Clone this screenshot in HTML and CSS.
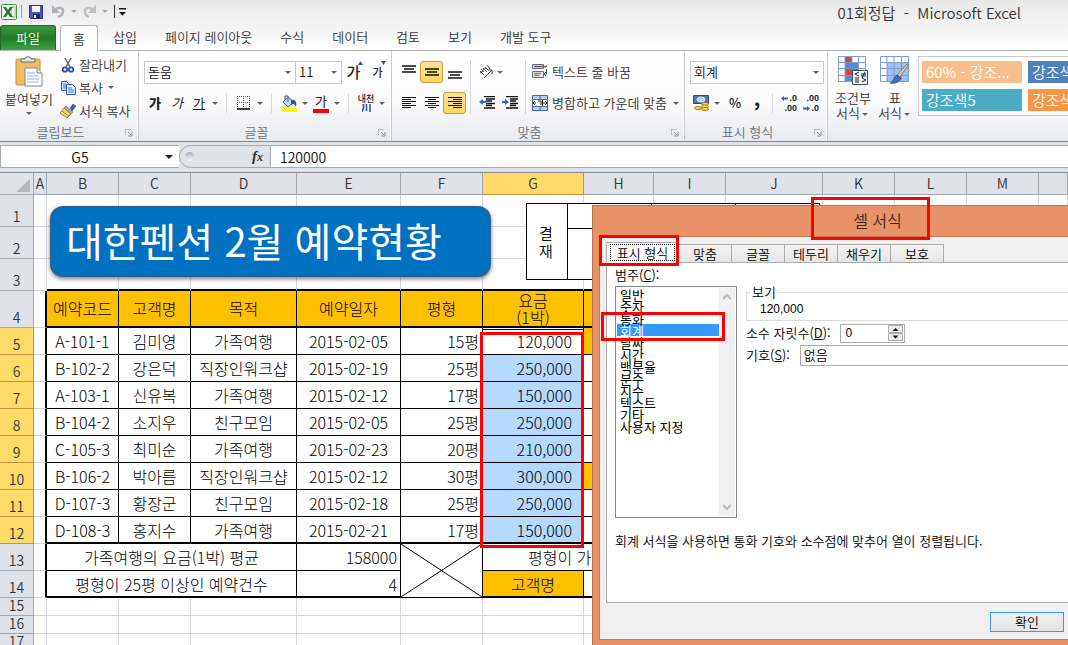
FILE: index.html
```html
<!DOCTYPE html>
<html lang="ko">
<head>
    <meta charset="UTF-8" />
    <meta name="viewport" content="width=device-width, initial-scale=1.0"/>
    <title>01회정답 - Microsoft Excel</title>
    <link rel="stylesheet" href="styles.css">
</head>
<body>
<header class="titlebar">
    <div class="quick">
        <svg class="logo" width="16" height="16" viewBox="0 0 16 16"><rect x=".5" y=".5" width="15" height="15" rx="1" fill="#eef6ee" stroke="#3f8f46"/><path d="M10 3h4v10h-4z" fill="#fff" stroke="#8dba90"/><path d="M2 3h3l2 3 2-3h3L8.500 8l3.500 5H9L7 10l-2 3H2l3.500-5z" fill="#1f7a2c"/></svg>
        <span class="bar"></span>
        <button aria-label="저장" class="quick-save"><svg width="14" height="14" viewBox="0 0 14 14"><path d="M.5.5h13v13h-12l-1-1z" fill="#4a55c0" stroke="#2c3590"/><path d="M3 1h8v6H3z" fill="#f4f7ff"/><path d="M4 9h7v5H4z" fill="#20286e"/><path d="M5 10h2v3H5z" fill="#fff"/></svg></button>
        <button aria-label="실행 취소" class="quick-undo"><svg width="13" height="13" viewBox="0 0 13 13"><path d="M3 5C6 2 11 2 11 6c0 3-2 5-5 6" fill="none" stroke="#b0b3b7" stroke-width="2.500"/><path d="M0 0v8h8z" fill="#b0b3b7"/></svg><i class="arrow pale"></i></button>
        <button aria-label="다시 실행" class="quick-redo"><svg width="13" height="13" viewBox="0 0 13 13"><path d="M10 5C7 2 2 2 2 6c0 3 1 5 4 6" fill="none" stroke="#bcbfc3" stroke-width="2.500"/><path d="M13 0v8H5z" fill="#bcbfc3"/></svg><i class="arrow pale"></i></button>
        <span class="bar dark"></span>
        <button aria-label="빠른 실행 도구 모음"><svg width="7" height="8" viewBox="0 0 7 8"><path d="M0 0h7v1.500H0zM0 4h7L3.500 7.500z" fill="#111"/></svg></button>
    </div>
    <h1>01회정답&nbsp; -&nbsp; Microsoft Excel</h1>
</header>

<nav class="tabs">
    <button class="tab file">파일</button>
    <button class="tab home">홈</button>
    <button class="tab">삽입</button>
    <button class="tab">페이지 레이아웃</button>
    <button class="tab">수식</button>
    <button class="tab">데이터</button>
    <button class="tab">검토</button>
    <button class="tab">보기</button>
    <button class="tab">개발 도구</button>
</nav>

<section class="ribbon">
    <div class="group clipboard">
        <div class="group-body">
            <button class="big paste">
                <svg width="28" height="31" viewBox="0 0 28 31"><rect x="1" y="3" width="24" height="26" rx="1" fill="#f0bd62" stroke="#c8913c"/><path d="M6 6V3h4c0-3 6-3 6 0h4v3z" fill="#e4e7ea" stroke="#6d7177"/><path d="M10 12h12l5 5v13H10z" fill="#fff" stroke="#7488a8"/><path d="M22 12v5h5" fill="#dde6f2" stroke="#7488a8"/><path d="M12 17h8M12 20h12M12 23h12M12 26h12" stroke="#9db3d0"/></svg>
                <span>붙여넣기</span><i class="arrow"></i>
            </button>
            <div class="small-list">
                <button><svg width="16" height="16" viewBox="0 0 16 16"><path d="M5 1l5 9M11 1L6 10" stroke="#56657c" stroke-width="1.500" fill="none"/><circle cx="5" cy="12.500" r="2.200" fill="none" stroke="#2a50b0" stroke-width="1.800"/><circle cx="11" cy="12.500" r="2.200" fill="none" stroke="#2a50b0" stroke-width="1.800"/></svg>잘라내기</button>
                <button><svg width="16" height="16" viewBox="0 0 16 16"><path d="M1.500 1.500h5l2 2v7h-7z" fill="#cfe0fb" stroke="#2f5fb4"/><path d="M6.500 4.500h6l3 3v7h-9z" fill="#e9f1ff" stroke="#2f5fb4"/><path d="M3 4h3M3 6h3M3 8h3M8 8h4M8 10h6M8 12h6" stroke="#4478c8"/></svg>복사<i class="arrow"></i></button>
                <button><svg width="16" height="16" viewBox="0 0 16 16"><path d="M10 5l3-4 3 2-4 5z" fill="#4a59a4" stroke="#343f78" stroke-width=".5"/><path d="M6 3l7 6-2 2-7-6z" fill="#a9adb8" stroke="#555" stroke-width=".5"/><path d="M4 5l7 6-4 4-7-5z" fill="#f3d965" stroke="#8f7426" stroke-width=".8"/><path d="M2 8l7 5" stroke="#a08530"/></svg>서식 복사</button>
            </div>
        </div>
        <div class="group-name">클립보드<svg class="launcher" viewBox="0 0 8 8"><path d="M0 6V0h6M3 3l3 3M7 3v4H3" fill="none" stroke="#8a8f97"/></svg></div>
    </div>

    <div class="group font">
        <div class="rows">
            <div class="row">
                <span class="combo font-name"><select aria-label="글꼴"><option>돋움</option></select><i class="arrow"></i></span>
                <span class="combo font-size"><select aria-label="글꼴 크기"><option>11</option></select><i class="arrow"></i></span>
                <button class="tool grow" aria-label="글꼴 크게">가<svg width="5" height="4" viewBox="0 0 5 4"><path d="M0 4h5L2.500 0z" fill="#2956b2"/></svg></button>
                <button class="tool shrink" aria-label="글꼴 작게">가<svg width="5" height="4" viewBox="0 0 5 4"><path d="M0 0h5L2.500 4z" fill="#2956b2"/></svg></button>
            </div>
            <div class="row">
                <button class="tool bold">가</button>
                <button class="tool italic">가</button>
                <button class="tool underline">가</button><i class="arrow"></i>
                <span class="sep"></span>
                <button class="tool" aria-label="테두리"><svg width="14" height="14" viewBox="0 0 14 14"><path d="M.5 0v12M6.500 0v12M12.500 0v12M0 .5h13M0 6.500h13" stroke="#555" stroke-dasharray="1 1"/><path d="M0 13h13" stroke="#000" stroke-width="1.500"/></svg></button><i class="arrow"></i>
                <span class="sep"></span>
                <button class="tool" aria-label="채우기 색"><svg width="16" height="17" viewBox="0 0 16 17"><path d="M7 2l6 5-6 5-5-5z" fill="#c8daf3" stroke="#3f5f92"/><path d="M7 7V1H4v4" fill="none" stroke="#44597a"/><path d="M10 5c5-1 6 3 5 7-1-3-3-4-5-2z" fill="#2456a4"/><path d="M0 13h16v4H0z" fill="#ff0"/></svg></button><i class="arrow"></i>
                <button class="tool font-color" aria-label="글꼴 색">가</button><i class="arrow"></i>
                <span class="sep"></span>
                <button class="tool phonetic" aria-label="윗주">내천<svg width="9" height="8" viewBox="0 0 9 8"><path d="M1.500 0v4L0 8M4.500 0v7M8 0v8" fill="none" stroke="#2453b5" stroke-width="1.600"/></svg></button><i class="arrow"></i>
            </div>
        </div>
        <div class="group-name">글꼴<svg class="launcher" viewBox="0 0 8 8"><path d="M0 6V0h6M3 3l3 3M7 3v4H3" fill="none" stroke="#8a8f97"/></svg></div>
    </div>

    <div class="group align">
        <div class="group-body">
            <div class="rows">
                <div class="row">
                    <button class="tool" aria-label="위쪽 맞춤"><svg width="14" height="14" viewBox="0 0 14 14"><path d="M0 1h14M2 4h10M0 7h14" stroke="#111" stroke-width="1.600"/></svg></button>
                    <button class="tool on" aria-label="가운데 맞춤"><svg width="14" height="14" viewBox="0 0 14 14"><path d="M0 4h14M2 7h10M0 10h14" stroke="#111" stroke-width="1.600"/></svg></button>
                    <button class="tool" aria-label="아래쪽 맞춤"><svg width="14" height="14" viewBox="0 0 14 14"><path d="M0 7h14M2 10h10M0 13h14" stroke="#111" stroke-width="1.600"/></svg></button>
                </div>
                <div class="row">
                    <button class="tool" aria-label="텍스트 왼쪽 맞춤"><svg width="14" height="12" viewBox="0 0 14 12"><path d="M0 .5h14M0 2.500h9M0 4.500h14M0 6.500h9M0 8.500h14M0 10.500h9" stroke="#111"/></svg></button>
                    <button class="tool" aria-label="텍스트 가운데 맞춤"><svg width="14" height="12" viewBox="0 0 14 12"><path d="M0 .5h14M3 2.500h8M0 4.500h14M3 6.500h8M0 8.500h14M3 10.500h8" stroke="#111"/></svg></button>
                    <button class="tool on" aria-label="텍스트 오른쪽 맞춤"><svg width="14" height="12" viewBox="0 0 14 12"><path d="M0 .5h14M5 2.500h9M0 4.500h14M5 6.500h9M0 8.500h14M5 10.500h9" stroke="#111"/></svg></button>
                </div>
            </div>
            <span class="sep tall"></span>
            <div class="rows">
                <div class="row orientation">
                    <button class="tool" aria-label="방향"><svg width="16" height="14" viewBox="0 0 16 14"><path d="M1 6l4 4M2 4l3 3M4 3l4 4M6 2l3 3M8 0l3 4M1 8l3-2M4 5l3-2" stroke="#444" fill="none"/><path d="M5 13l8-8M13 9V5H9" stroke="#444" fill="none"/></svg></button><i class="arrow"></i>
                </div>
                <div class="row">
                    <button class="tool" aria-label="내어쓰기"><svg width="16" height="14" viewBox="0 0 16 14"><path d="M5 .5h11M7 3h9M7 5h6M7 7.500h9M7 9.500h6M5 12h11" stroke="#111" stroke-width="1.400"/><path d="M0 6l4-3v2h3v2H4v2z" fill="#2f62c4"/></svg></button>
                    <button class="tool" aria-label="들여쓰기"><svg width="16" height="14" viewBox="0 0 16 14"><path d="M4 .5h12M8 3h8M8 5h6M8 7.500h8M8 9.500h6M4 12h12" stroke="#111" stroke-width="1.400"/><path d="M7 6L3 3v2H0v2h3v2z" fill="#2f62c4"/></svg></button>
                </div>
            </div>
            <span class="sep tall"></span>
            <div class="rows">
                <div class="row">
                    <button class="wide"><svg width="16" height="16" viewBox="0 0 16 16"><path d="M.5.500h11v4H.5zM.5 7.500h11v6H.5z" fill="#dfe8f6" stroke="#54719f"/><path d="M2 2.500h13" stroke="#8d4a22" stroke-width="1.500"/><path d="M2 9.500h7M2 11.500h5" stroke="#c07d45" stroke-width="1.300"/><path d="M14.500 5v5h-2M14 8l-2 2 2 2" fill="none" stroke="#2f5ca8"/></svg>텍스트 줄 바꿈</button>
                </div>
                <div class="row">
                    <button class="wide"><svg width="16" height="16" viewBox="0 0 16 16"><path d="M.5.500h15v15H.5zM8 0v4M8 12v4M0 4.500h16M0 11.500h16" fill="#b9cfef" stroke="#46659a"/><path d="M1 5h14v6H1z" fill="#fff"/><path d="M1 8h3M12 8h3M3 6l-2 2 2 2M13 6l2 2-2 2M6 6h3v4M10.500 5v6M10.500 8H12" stroke="#222" fill="none"/></svg>병합하고 가운데 맞춤<i class="arrow"></i></button>
                </div>
            </div>
        </div>
        <div class="group-name">맞춤<svg class="launcher" viewBox="0 0 8 8"><path d="M0 6V0h6M3 3l3 3M7 3v4H3" fill="none" stroke="#8a8f97"/></svg></div>
    </div>

    <div class="group number">
        <div class="rows">
            <div class="row">
                <span class="combo number-format"><select aria-label="표시 형식"><option>회계</option></select><i class="arrow"></i></span>
            </div>
            <div class="row">
                <button class="tool" aria-label="회계 표시 형식"><svg width="17" height="16" viewBox="0 0 17 16"><path d="M.5.500h15v8H.5z" fill="#4c78bd" stroke="#274b87"/><ellipse cx="8" cy="4.500" rx="4" ry="2.500" fill="#b9d0f0" stroke="#dfeafa"/><ellipse cx="12" cy="9" rx="3.500" ry="1.500" fill="#fbdc6d" stroke="#a9780f"/><ellipse cx="12" cy="11.500" rx="3.500" ry="1.500" fill="#fbdc6d" stroke="#a9780f"/><ellipse cx="5" cy="13" rx="3.500" ry="1.500" fill="#fbdc6d" stroke="#a9780f"/><ellipse cx="12" cy="14" rx="3.500" ry="1.500" fill="#fbdc6d" stroke="#a9780f"/></svg></button><i class="arrow"></i>
                <button class="tool percent">%</button>
                <button class="tool comma">,</button>
                <span class="sep"></span>
                <button class="tool decimals" aria-label="자릿수 늘림"><span><svg width="7" height="5" viewBox="0 0 7 5"><path d="M0 2.500L3 0v1.500h4v2H3V5z" fill="#2f62c4"/></svg>.0</span><span>.00</span></button>
                <button class="tool decimals" aria-label="자릿수 줄임"><span>.00</span><span><svg width="7" height="5" viewBox="0 0 7 5"><path d="M7 2.500L4 0v1.500H0v2h4V5z" fill="#2f62c4"/></svg>.0</span></button>
            </div>
        </div>
        <div class="group-name">표시 형식<svg class="launcher" viewBox="0 0 8 8"><path d="M0 6V0h6M3 3l3 3M7 3v4H3" fill="none" stroke="#8a8f97"/></svg></div>
    </div>

    <div class="group styles">
        <button class="big">
            <svg width="30" height="30" viewBox="0 0 30 30"><path d="M.5.500h27v25H.5z" fill="#fff"/><path d="M7 1h7v5H7zM7 13h13v6H7z" fill="#d8442c"/><path d="M7 7h13v5H7zM7 20h7v5H7z" fill="#5b87d8"/><path d="M.5.500h27v25H.5zM0 6.500h28M0 12.500h28M0 19.500h28M7 0v26M14 0v7M20.500 0v26" fill="none" stroke="#7d9dcc"/><path d="M14.500 14.500h15v14h-15z" fill="#f3f6fb" stroke="#3c4d6a"/><path d="M21 16l-4 2 4 2M17 22h4M23 18h5M23 20h5M27 16l-3 6M17 24h4M24 22l4 2-4 2M17 26h4" stroke="#222" fill="none"/></svg>
            <span>조건부</span><span>서식<i class="arrow"></i></span>
        </button>
        <button class="big">
            <svg width="30" height="30" viewBox="0 0 30 30"><path d="M.5.500h28v25H.5z" fill="#fff"/><path d="M7 7h21v18H7z" fill="#9fc1f3"/><path d="M.5.500h28v25H.5zM0 6.500h29M0 12.500h29M0 19.500h29M7 0v26M14 0v26M21.500 0v26" fill="none" stroke="#7d9dcc"/><path d="M29 8L20 21l-3-2L27 8z" fill="#d9c9ae" stroke="#6b6353" stroke-width=".7"/><path d="M17 19l4 3c-1 4-6 6-11 5 4-1 3-6 7-8z" fill="#3f6cc0" stroke="#28437c" stroke-width=".7"/></svg>
            <span>표</span><span>서식<i class="arrow"></i></span>
        </button>
        <div class="gallery">
            <button class="chip peach">60% - 강조...</button>
            <button class="chip blue">강조색1</button>
            <button class="chip teal">강조색5</button>
            <button class="chip orange">강조색6</button>
        </div>
    </div>
</section>

<section class="formula">
    <div class="name-box"><input type="text" aria-label="이름 상자" value="G5"><i class="arrow"></i></div>
    <div class="fx"><span class="knob"></span><button aria-label="함수 삽입">f<small>x</small></button></div>
    <input class="formula-text" type="text" aria-label="수식 입력줄" value="120000">
</section>

<main class="sheet">
    <table class="grid">
        <colgroup>
            <col class="w-head"><col class="w-a"><col class="w-b"><col class="w-b"><col class="w-d"><col class="w-e"><col class="w-f"><col class="w-g">
            <col class="w-h"><col class="w-b"><col class="w-j"><col class="w-b"><col class="w-b"><col class="w-b"><col>
        </colgroup>
        <thead>
        <tr>
            <th class="corner"></th><th>A</th><th>B</th><th>C</th><th>D</th><th>E</th><th>F</th><th class="picked">G</th>
            <th>H</th><th>I</th><th>J</th><th>K</th><th>L</th><th>M</th><th></th>
        </tr>
        </thead>
        <tbody>
        <tr class="tall"><th>1</th><td></td><td></td><td></td><td></td><td></td><td></td><td></td><td></td><td></td><td></td><td></td><td></td><td></td><td></td></tr>
        <tr class="tall"><th>2</th><td></td><td></td><td></td><td></td><td></td><td></td><td></td><td></td><td></td><td></td><td></td><td></td><td></td><td></td></tr>
        <tr class="tall thick"><th>3</th><td class="edge-off"></td><td></td><td></td><td></td><td></td><td></td><td></td><td></td><td></td><td></td><td></td><td></td><td></td><td></td></tr>
        <tr class="data head thick"><th>4</th><td class="edge"></td><td>예약코드</td><td>고객명</td><td>목적</td><td>예약일자</td><td>평형</td><td>요금<br>(1박)</td><td></td><td colspan="6"></td></tr>
        <tr class="data"><th class="picked">5</th><td class="edge"></td><td>A-101-1</td><td>김미영</td><td>가족여행</td><td>2015-02-05</td><td class="right">15평</td><td class="fee active">120,000</td><td class="gold"></td><td colspan="6"></td></tr>
        <tr class="data"><th class="picked">6</th><td class="edge"></td><td>B-102-2</td><td>강은덕</td><td>직장인워크샵</td><td>2015-02-19</td><td class="right">25평</td><td class="fee">250,000</td><td></td><td colspan="6"></td></tr>
        <tr class="data"><th class="picked">7</th><td class="edge"></td><td>A-103-1</td><td>신유복</td><td>가족여행</td><td>2015-02-12</td><td class="right">17평</td><td class="fee">150,000</td><td></td><td colspan="6"></td></tr>
        <tr class="data"><th class="picked">8</th><td class="edge"></td><td>B-104-2</td><td>소지우</td><td>친구모임</td><td>2015-02-05</td><td class="right">25평</td><td class="fee">250,000</td><td></td><td colspan="6"></td></tr>
        <tr class="data"><th class="picked">9</th><td class="edge"></td><td>C-105-3</td><td>최미순</td><td>가족여행</td><td>2015-02-23</td><td class="right">20평</td><td class="fee">210,000</td><td></td><td colspan="6"></td></tr>
        <tr class="data"><th class="picked">10</th><td class="edge"></td><td>B-106-2</td><td>박아름</td><td>직장인워크샵</td><td>2015-02-12</td><td class="right">30평</td><td class="fee">300,000</td><td class="gold"></td><td colspan="6"></td></tr>
        <tr class="data"><th class="picked">11</th><td class="edge"></td><td>D-107-3</td><td>황장군</td><td>친구모임</td><td>2015-02-18</td><td class="right">25평</td><td class="fee">250,000</td><td></td><td colspan="6"></td></tr>
        <tr class="data thick"><th class="picked">12</th><td class="edge"></td><td>D-108-3</td><td>홍지수</td><td>가족여행</td><td>2015-02-21</td><td class="right">17평</td><td class="fee">150,000</td><td></td><td colspan="6"></td></tr>
        <tr class="data"><th>13</th><td class="edge"></td><td colspan="3">가족여행의 요금(1박) 평균</td><td class="right">158000</td><td class="crossed" rowspan="2"><svg viewBox="0 0 81 53" preserveAspectRatio="none"><path d="M0 0l81 53M81 0L0 53" stroke="#000"/></svg></td><td class="summary" colspan="2">평형이 가</td><td colspan="6"></td></tr>
        <tr class="data thick"><th>14</th><td class="edge"></td><td colspan="3">평형이 25평 이상인 예약건수</td><td class="right">4</td><td class="gold">고객명</td><td></td><td colspan="6"></td></tr>
        <tr class="short"><th>15</th><td></td><td></td><td></td><td></td><td></td><td></td><td></td><td></td><td></td><td></td><td></td><td></td><td></td><td></td></tr>
        <tr class="short"><th>16</th><td></td><td></td><td></td><td></td><td></td><td></td><td></td><td></td><td></td><td></td><td></td><td></td><td></td><td></td></tr>
        <tr class="short"><th>17</th><td></td><td></td><td></td><td></td><td></td><td></td><td></td><td></td><td></td><td></td><td></td><td></td><td></td><td></td></tr>
        </tbody>
    </table>

    <div class="banner">대한펜션 2월 예약현황</div>

    <div class="approval">
        <div class="approval-label">결<br>재</div>
        <div></div><div></div><div></div>
        <div></div><div></div><div></div>
    </div>

    <span class="mark mark-fee"></span>

    <div class="dialog" role="dialog" aria-labelledby="dialog-title">
        <h2 id="dialog-title">셀 서식</h2>
        <div class="dialog-body">
            <div class="dialog-tabs">
                <button class="current"><span>표시 형식</span></button>
                <button>맞춤</button>
                <button>글꼴</button>
                <button>테두리</button>
                <button>채우기</button>
                <button>보호</button>
            </div>
            <div class="panel">
                <div class="panel-columns">
                    <div class="category">
                        <label for="category">범주(<u>C</u>):</label>
                        <div class="listbox">
                            <select id="category" size="19">
                                <option>일반</option>
                                <option>숫자</option>
                                <option>통화</option>
                                <option selected>회계</option>
                                <option>날짜</option>
                                <option>시간</option>
                                <option>백분율</option>
                                <option>분수</option>
                                <option>지수</option>
                                <option>텍스트</option>
                                <option>기타</option>
                                <option>사용자 지정</option>
                            </select>
                            <div class="scroll">
                                <svg width="8" height="6" viewBox="0 0 8 6"><path d="M0 5l4-4 4 4" fill="none" stroke="#bbb" stroke-width="2"/></svg>
                                <svg width="8" height="6" viewBox="0 0 8 6"><path d="M0 1l4 4 4-4" fill="none" stroke="#bbb" stroke-width="2"/></svg>
                            </div>
                        </div>
                    </div>
                    <div class="options">
                        <fieldset>
                            <legend>보기</legend>
                            <div class="sample">120,000</div>
                        </fieldset>
                        <div class="field">
                            <label for="digits">소수 자릿수(<u>D</u>):</label>
                            <span class="spinner"><input type="text" id="digits" value="0"><svg width="15" height="16" viewBox="0 0 15 16"><path d="M.5.500h14v7H.5zM.5 8.500h14v7H.5z" fill="#eee" stroke="#aaa"/><path d="M4.500 6h6l-3-3zM4.500 10.500h6l-3 3z" fill="#111"/></svg></span>
                        </div>
                        <div class="field">
                            <label for="symbol">기호(<u>S</u>):</label>
                            <select id="symbol"><option>없음</option></select>
                        </div>
                    </div>
                </div>
                <p>회계 서식을 사용하면 통화 기호와 소수점에 맞추어 열이 정렬됩니다.</p>
            </div>
            <div class="dialog-buttons"><button>확인</button></div>
        </div>
        <span class="mark mark-title"></span>
        <span class="mark mark-tab"></span>
        <span class="mark mark-category"></span>
    </div>
</main>
</body>
</html>
```
FILE: styles.css
```css
* {
    box-sizing: border-box;
}

body {
    margin: 0;
    height: 100vh;
    display: flex;
    flex-direction: column;
    overflow: hidden;
    font-family: "Noto Sans CJK KR", sans-serif;
    font-size: 13px;
    font-weight: 350;
    line-height: 18px;
    color: #333;
    background: #fff;
}

button, input, select {
    font: inherit;
    color: inherit;
    margin: 0;
    padding: 0;
    border: none;
    border-radius: 0;
    background: none;
    appearance: none;
    outline: none;
}

button {
    white-space: nowrap;
}

svg {
    display: block;
    flex: none;
}

/* title bar */
.titlebar {
    flex: none;
    height: 25px;
    display: flex;
    justify-content: space-between;
    padding: 0 47px 0 1px;
    background: linear-gradient(#e8e8e8, #f3f3f3);
}

.titlebar h1 {
    margin: 0;
    font-size: 15px;
    font-weight: 350;
    line-height: 25px;
}

.quick {
    display: flex;
    align-items: center;
    height: 23px;
}

.quick button {
    display: flex;
    align-items: center;
}

.bar {
    width: 1px;
    height: 13px;
    margin: 0 7px 0 4px;
    background: #999;
}

.bar.dark {
    background: #333;
    margin: 0 4px 0 0;
}

.quick-undo {
    margin-left: 9px;
}

.quick-undo .arrow, .quick-redo .arrow {
    width: 18px;
}

.arrow {
    flex: none;
    display: inline-flex;
    width: 10px;
    justify-content: center;
    vertical-align: middle;
}

.arrow::before {
    content: "";
    border: 3px solid transparent;
    border-top-color: #666;
    border-bottom: none;
}

.arrow.pale::before {
    border-top-color: #aaa;
}

/* ribbon tabs */
.tabs {
    flex: none;
    display: flex;
    height: 26px;
    background: linear-gradient(#f3f3f3, #fff);
    border-bottom: 1px solid #b3b5b9;
}

.tab {
    height: 24px;
    padding: 0 14px;
}

.tab.file {
    width: 56px;
    height: 25px;
    color: #fff;
    border: 1px solid #1d6b22;
    border-bottom: none;
    border-radius: 3px 3px 0 0;
    background: linear-gradient(#3c9a3f, #1f7a26 50%, #3aa53e);
}

.tab.home {
    height: 26px;
    width: 38px;
    margin: 0 1px 0 4px;
    padding: 0;
    border: 1px solid #b3b5b9;
    border-bottom: none;
    border-radius: 3px 3px 0 0;
    background: #fff;
}

/* ribbon */
.ribbon {
    flex: none;
    height: 91px;
    display: flex;
    overflow: hidden;
    background: linear-gradient(#fff, #fafafb 60%, #e7e9ec);
    border-bottom: 1px solid #85898f;
}

.group {
    flex: none;
    display: flex;
    flex-direction: column;
    padding: 9px 0 0 5px;
    border-right: 1px solid #c9ccd1;
    box-shadow: inset -1px 0 #fff;
}

.group-body {
    display: flex;
}

.group-name {
    position: relative;
    margin-top: auto;
    padding-right: 22px;
    text-align: center;
    color: #6a707c;
}

.launcher {
    position: absolute;
    right: 5px;
    bottom: 4px;
    width: 8px;
    height: 8px;
}

.clipboard {
    width: 139px;
    padding-top: 2px;
}

.font {
    width: 253px;
}

.align {
    width: 293px;
}

.number {
    width: 143px;
}

.styles {
    flex: 1;
    flex-direction: row;
    padding: 5px 0 0 4px;
    border-right: none;
}

.rows {
    display: flex;
    flex-direction: column;
    gap: 7px;
}

.row {
    display: flex;
    align-items: center;
    height: 24px;
}

.tool {
    position: relative;
    display: flex;
    align-items: center;
    justify-content: center;
    width: 22px;
    height: 22px;
    color: #222;
    border-radius: 3px;
}

.align .tool {
    width: 23px;
}

.align .orientation .arrow {
    width: 4px;
}

.tool.on {
    border: 1px solid #c29b3e;
    background: linear-gradient(#fde49a, #fed65b);
}

.sep {
    width: 1px;
    height: 20px;
    margin: 0 6px;
    background: #d5d8dc;
}

.sep.tall {
    height: 54px;
    margin: 0 4px;
}

.bold {
    font-weight: 900;
}

.italic {
    font-style: italic;
    font-weight: 400;
}

.underline {
    font-weight: 400;
    text-decoration: underline;
}

.grow, .shrink {
    align-items: flex-start;
    margin-left: 2px;
    font-size: 15px;
    font-weight: 500;
    line-height: 22px;
}

.shrink {
    font-size: 11px;
}

.grow svg, .shrink svg {
    margin-left: -2px;
}

.font-color {
    font-weight: 400;
    line-height: 12px;
    align-items: flex-start;
    padding-top: 3px;
}

.font-color::after {
    content: "";
    position: absolute;
    left: 3px;
    right: 3px;
    bottom: 1px;
    height: 4px;
    background: #f00;
}

.phonetic {
    flex-direction: column;
    font-size: 9px;
    font-weight: 500;
    line-height: 10px;
}

.percent {
    margin-left: 2px;
    font-weight: 500;
}

.comma {
    font-size: 20px;
    font-weight: 700;
    line-height: 12px;
    align-items: flex-start;
}

.decimals {
    flex-direction: column;
    align-items: flex-end;
    padding-right: 2px;
    font-family: "Liberation Sans", sans-serif;
    font-size: 9px;
    font-weight: 700;
    line-height: 10px;
}

.decimals span {
    display: flex;
    align-items: center;
    gap: 1px;
}

.number .sep {
    margin: 0 4px;
}

.combo {
    display: flex;
    align-items: center;
    height: 23px;
    background: #fff;
    border: 1px solid #c8cbd0;
}

.combo select {
    flex: 1;
    min-width: 0;
    padding-left: 3px;
    color: #111;
}

.combo .arrow {
    width: 14px;
}

.font-name {
    width: 152px;
}

.font-size {
    width: 47px;
    margin-left: -1px;
}

.number-format {
    width: 134px;
}

.big {
    display: flex;
    flex-direction: column;
    align-items: center;
    width: 42px;
    line-height: 15px;
}

.big svg {
    margin-bottom: 4px;
}

.paste {
    width: 48px;
    padding-top: 3px;
}

.paste .arrow {
    margin-top: 6px;
}

.small-list {
    display: flex;
    flex-direction: column;
    margin-left: 7px;
}

.small-list button, .wide {
    display: flex;
    align-items: center;
    gap: 4px;
    height: 23px;
}

.small-list button {
    gap: 3px;
}

.wide {
    margin-left: 2px;
}

.gallery {
    flex: 1;
    display: grid;
    grid-template-columns: 100px 100px;
    grid-auto-rows: 22px;
    gap: 6px;
    height: 60px;
    margin-left: 2px;
    padding: 4px 3px;
    overflow: hidden;
    background: #fff;
    border: 1px solid #c8cbd0;
    border-right: none;
}

.chip {
    padding-left: 4px;
    font-size: 15px;
    line-height: 20px;
    text-align: left;
    color: #fff;
    overflow: hidden;
}

.peach {
    background: #fabf8f;
}

.blue {
    background: #4f81bd;
}

.teal {
    background: #4bacc6;
}

.orange {
    background: #f79646;
}

/* formula bar */
.formula {
    flex: none;
    display: flex;
    height: 31px;
    padding: 3px 0 4px;
    font-size: 14px;
    color: #111;
    background: #dfe2e8;
    border-bottom: 1px solid #83878d;
}

.name-box {
    display: flex;
    align-items: center;
    width: 179px;
    background: #fff;
    border: 1px solid #a5a9b0;
    border-right: none;
}

.name-box input {
    flex: 1;
    min-width: 0;
    text-align: center;
}

.name-box .arrow {
    width: 20px;
}

.name-box .arrow::before {
    border-width: 4px;
    border-top-color: #222;
    border-bottom: none;
}

.fx {
    display: flex;
    align-items: center;
    justify-content: space-between;
    width: 92px;
    padding: 0 7px 0 5px;
    border: 1px solid #a5a9b0;
    border-radius: 12px 0 0 12px;
}

.fx button {
    font-family: "Liberation Serif", serif;
    font-size: 15px;
    font-style: italic;
    font-weight: 700;
    color: #333;
}

.fx small {
    font-size: 12px;
}

.knob {
    width: 9px;
    height: 9px;
    border-radius: 50%;
    background: linear-gradient(#aeb2b8, #f4f5f7);
}

.formula-text {
    flex: 1;
    padding-left: 9px;
    background: #fff;
    border: 1px solid #a5a9b0;
    border-width: 1px 0;
}

/* sheet */
.sheet {
    position: relative;
    flex: 1;
    min-height: 0;
    overflow: hidden;
}

.grid {
    width: 100%;
    table-layout: fixed;
    border-collapse: separate;
    border-spacing: 0;
    color: #000;
}

.w-head { width: 34px; }
.w-a { width: 13px; }
.w-b { width: 72px; }
.w-d { width: 106px; }
.w-e { width: 104px; }
.w-f { width: 82px; }
.w-g { width: 101px; }
.w-h { width: 70px; }
.w-j { width: 97px; }

.grid th {
    padding: 0 0 2px;
    font-size: 14px;
    font-weight: 350;
    line-height: 15px;
    vertical-align: bottom;
    color: #333;
    background: #dfe2e8;
    border-right: 1px solid #a2a6ad;
    border-bottom: 1px solid #a2a6ad;
}

.grid thead th {
    height: 22px;
    padding: 0;
    vertical-align: middle;
}

.grid .corner {
    background: linear-gradient(135deg, transparent 50%, #b5b9bf 50%) 17px 6px / 13px 13px no-repeat #dfe2e8;
}

.grid th.picked {
    background: #ffdb69;
    border-color: #c5923a;
}

.grid td {
    padding: 0;
    font-size: 16px;
    font-weight: 300;
    line-height: 20px;
    text-align: center;
    white-space: nowrap;
    border-right: 1px solid #d4d7db;
    border-bottom: 1px solid #d4d7db;
}

.tall {
    height: 32px;
}

.data {
    height: 27px;
}

.short {
    height: 18px;
}

.grid .data td {
    border-color: #000;
}

.grid .thick td {
    border-bottom: 2px solid #000;
}

.grid .data .edge, .grid .thick .edge-off {
    border-bottom: 1px solid #d4d7db;
}

.grid .data .edge {
    border-right: 2px solid #000;
}

.grid .head {
    height: 37px;
}

.grid .head td {
    line-height: 17px;
}

.grid .head td:not(.edge), .grid td.gold {
    background: #ffc000;
}

.grid .right {
    padding-right: 3px;
    text-align: right;
}

.grid .fee {
    padding-right: 11px;
    text-align: right;
    background: #b5d9ff;
}

.grid .active {
    background: #fff;
    box-shadow: inset 0 1px #fff, inset 0 2px #000;
}

.crossed svg {
    width: 100%;
    height: 53px;
}

.grid .summary {
    padding-left: 45px;
    text-align: left;
}

.banner {
    position: absolute;
    left: 50px;
    top: 33px;
    width: 441px;
    height: 71px;
    padding-left: 14px;
    font-size: 40px;
    font-weight: 400;
    line-height: 64px;
    color: #fff;
    background: #0070c0;
    border: 2px solid #385d8a;
    border-radius: 13px;
    box-shadow: 0 2px 4px rgba(0, 0, 0, 0.5);
}

.approval {
    position: absolute;
    left: 526px;
    top: 30px;
    display: grid;
    grid-template-columns: 41px 84px 84px 84px;
    grid-template-rows: 25px 51px;
    color: #000;
    background: #fff;
    border: 1px solid #000;
    border-width: 1px 0 0 1px;
}

.approval div {
    border: 1px solid #000;
    border-width: 0 1px 1px 0;
}

.approval .approval-label {
    grid-row: span 2;
    padding: 20px 2px 0 0;
    font-size: 15px;
    text-align: center;
}

.mark {
    position: absolute;
    border: 3px solid #f00;
    pointer-events: none;
}

.mark-fee {
    left: 480px;
    top: 159px;
    width: 104px;
    height: 216px;
}

.mark-title {
    left: 218px;
    top: -9px;
    width: 119px;
    height: 43px;
}

.mark-tab {
    left: 6px;
    top: 29px;
    width: 80px;
    height: 31px;
}

.mark-category {
    left: 8px;
    top: 106px;
    width: 124px;
    height: 29px;
}

/* format cells dialog */
.dialog {
    position: absolute;
    left: 592px;
    top: 32px;
    width: 571px;
    padding: 0 6px 6px;
    color: #000;
    background: #e99268;
    border: 1px solid #b9734f;
}

.dialog h2 {
    margin: 0;
    height: 30px;
    font-size: 16px;
    font-weight: 350;
    line-height: 28px;
    text-align: center;
    color: #3a2a22;
}

.dialog-body {
    padding: 5px 0 7px 6px;
    background: #f0f0f0;
    border: 1px solid #c07c58;
}

.dialog-tabs {
    display: flex;
    align-items: flex-end;
    height: 20px;
}

.dialog-tabs button {
    height: 18px;
    width: 53px;
    line-height: 16px;
    background: linear-gradient(#f3f3f3, #e6e6e6);
    border: 1px solid #acacac;
    border-width: 1px 1px 0 0;
}

.dialog-tabs .current {
    width: 73px;
    height: 21px;
    margin-bottom: -1px;
    background: #fff;
    border-left-width: 1px;
}

.dialog-tabs .current span {
    display: block;
    margin: 0 4px 1px;
    line-height: 15px;
    outline: 1px dotted #000;
}

.panel {
    height: 341px;
    padding: 3px 0 0 8px;
    background: #fff;
    border: 1px solid #acacac;
    border-right: none;
}

.panel-columns {
    display: flex;
    gap: 9px;
}

.category label {
    display: block;
    height: 20px;
}

.listbox {
    display: flex;
    width: 122px;
    height: 232px;
    padding: 1px;
    border: 1px solid #828790;
}

.listbox select {
    flex: 1;
    min-width: 0;
    overflow: hidden;
}

.listbox option {
    display: flex;
    align-items: center;
    height: 12px;
    min-height: 12px;
    padding: 0 3px;
    line-height: 12px;
    overflow: visible;
}

.listbox option:checked {
    background: linear-gradient(#3399ff, #3399ff);
    -webkit-text-fill-color: #fff;
}

.scroll {
    display: flex;
    flex-direction: column;
    align-items: center;
    justify-content: space-between;
    width: 16px;
    padding: 6px 0;
    background: #f0f0f0;
}

.options {
    flex: 1;
    padding-top: 18px;
}

fieldset {
    margin: 0;
    padding: 0 13px 2px;
    border: 1px solid #dcdcdc;
    border-right: none;
}

legend {
    padding: 0 2px;
    margin-left: -10px;
    line-height: 16px;
}

.sample, .spinner {
    font-family: "Liberation Sans", sans-serif;
    font-size: 12px;
}

.field {
    display: flex;
    align-items: center;
    gap: 10px;
    height: 20px;
    margin-top: 2px;
}

.spinner {
    display: flex;
    align-items: center;
    width: 65px;
    height: 19px;
    padding: 0 1px 0 4px;
    border: 1px solid #acacac;
}

.spinner input {
    flex: 1;
    min-width: 0;
}

.field select {
    flex: 1;
    height: 21px;
    padding-left: 3px;
    border: 1px solid #acacac;
    border-right: none;
}

.panel p {
    margin: 14px 0 0;
}

.dialog-buttons {
    display: flex;
    justify-content: flex-end;
    padding: 9px 91px 0 0;
}

.dialog-buttons button {
    width: 74px;
    height: 20px;
    line-height: 16px;
    background: linear-gradient(#f0f0f0, #e5e5e5);
    border: 1px solid #3399ff;
}
```
